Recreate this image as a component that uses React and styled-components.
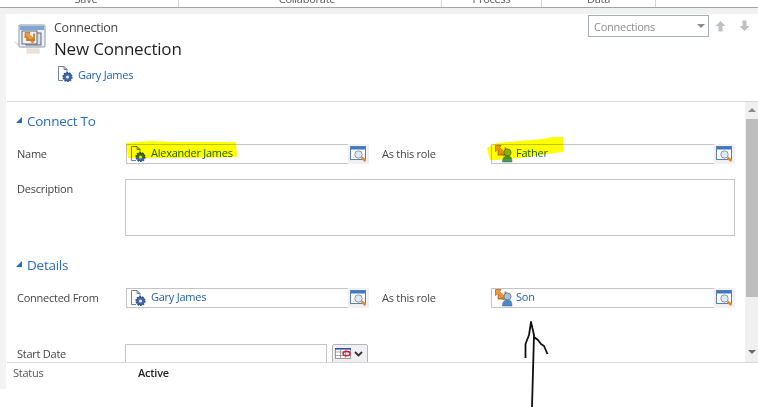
import React from "react";
import styled, { createGlobalStyle } from "styled-components";

const Global = createGlobalStyle`
  html, body { margin: 0; padding: 0; background: #fff; }
  body { font-family: "Open Sans", "Noto Sans", sans-serif; font-size: 11px; letter-spacing: -0.25px; color: #444; }
`;

const Page = styled.div`
  position: relative;
  width: 758px;
  height: 407px;
  overflow: hidden;
  background: #fff;
  display: flex;
  flex-direction: column;
`;
const Ribbon = styled.div`
  height: 7px;
  flex: none;
  display: flex;
  overflow: hidden;
  border-bottom: 1px solid #a3a3a3;
`;
const RibbonCell = styled.div`
  width: ${p => p.$w}px;
  flex: none;
  height: 7px;
  border-right: 1px solid #d4d4d4;
  box-sizing: border-box;
  padding-right: ${p => p.$pad || 0}px;
  display: flex;
  align-items: flex-end;
  justify-content: center;
  color: #5a5a5a;
  font-size: 11px;
  line-height: 16px;
  white-space: nowrap;
`;
const Band = styled.div`
  height: 6px;
  flex: none;
  background: #f1f1f1;
`;
const Shell = styled.div`
  height: 375px;
  flex: none;
  display: flex;
  background: #f3f3f3;
  padding-left: 6px;
`;
const Main = styled.div`
  flex: 1;
  min-width: 0;
  background: #fff;
  display: flex;
  flex-direction: column;
`;
const Header = styled.div`
  height: 87px;
  flex: none;
  margin-left: 1px;
  border-bottom: 1px solid #d6d6d6;
  display: flex;
  padding-left: 6px;
`;
const EntityIconWrap = styled.div`
  width: 41px;
  flex: none;
  padding-top: 10px;
`;
const Titles = styled.div`
  flex: 1;
  display: flex;
  flex-direction: column;
`;
const EntityType = styled.div`
  font-size: 12.5px;
  line-height: 16px;
  margin-top: 6px;
  color: #444;
`;
const EntityName = styled.div`
  font-size: 17px;
  line-height: 22px;
  margin-top: 2px;
  letter-spacing: -0.2px;
  color: #1f1f1f;
`;
const Owner = styled.div`
  display: flex;
  align-items: center;
  margin: 5px 0 0 3px;
  gap: 5px;
  color: #1f5fb4;
`;
const Pager = styled.div`
  display: flex;
  align-items: flex-start;
  padding: 1px 8px 0 0;
`;
const SelectBox = styled.div`
  width: 121px;
  height: 22px;
  box-sizing: border-box;
  border: 1px solid #a6adb8;
  display: flex;
  align-items: center;
  justify-content: space-between;
  padding: 0 3px 0 5px;
  color: #8c8c8c;
  font-size: 11px;
`;
const Caret = styled.span`
  width: 0;
  height: 0;
  border-left: 4px solid transparent;
  border-right: 4px solid transparent;
  border-top: 4px solid #8c8c8c;
`;
const PagerButtons = styled.div`
  display: flex;
  gap: 13px;
  margin: 5px 0 0 6px;
`;
const Body = styled.div`
  height: 260px;
  flex: none;
  display: flex;
`;
const Form = styled.div`
  flex: 1;
  min-width: 0;
  overflow: hidden;
  padding-left: 11px;
`;
const Section = styled.div`
  display: flex;
  align-items: center;
  gap: 5px;
  height: 18px;
  margin-top: ${p => p.$top}px;
  margin-left: -1px;
  color: #2a6bbd;
  font-size: 13.5px;
`;
const Triangle = styled.span`
  width: 0;
  height: 0;
  border-left: 6px solid transparent;
  border-bottom: 6px solid #1f6fc0;
  margin-top: -3px;
`;
const Row = styled.div`
  display: grid;
  grid-template-columns: 109px 243px 122px 244px;
  height: 20px;
  margin-top: ${p => p.$top}px;
  align-items: center;
`;
const Label = styled.div`
  color: #444;
  padding-left: ${p => p.$inset || 0}px;
  margin-top: -2px;
  white-space: nowrap;
`;
const Lookup = styled.div`
  height: 20px;
  box-sizing: border-box;
  border: 1px solid #c4c4c4;
  border-right: 0;
  display: flex;
  align-items: center;
  padding-left: 3px;
  gap: 5px;
  color: #1f5fb4;
  background: #fff;
`;
const LookupText = styled.span`
  flex: 1;
  margin-top: -4px;
`;
const LookupBtn = styled.span`
  width: 21px;
  height: 20px;
  margin: -1px 0;
  flex: none;
  background: #f0f0f3;
  display: flex;
  align-items: center;
  justify-content: center;
`;
const DescRow = styled.div`
  display: grid;
  grid-template-columns: 108px 610px;
  margin-top: 15px;
`;
const DescLabel = styled(Label)`
  margin-top: 2px;
`;
const TextArea = styled.div`
  height: 57px;
  box-sizing: border-box;
  border: 1px solid #c4c4c4;
`;
const DateRow = styled.div`
  display: flex;
  height: 22px;
  margin-top: 36px;
`;
const DateLabel = styled(Label)`
  width: 108px;
  flex: none;
  margin-top: 0;
  padding-top: 2px;
`;
const DateInput = styled.div`
  width: 202px;
  box-sizing: border-box;
  border: 1px solid #c4c4c4;
`;
const CalBtn = styled.div`
  width: 36px;
  box-sizing: border-box;
  margin-left: 5px;
  border: 1px solid #b4b4b8;
  border-radius: 2px 2px 0 0;
  background: #f0f0f3;
  display: flex;
  align-items: flex-start;
  justify-content: center;
  padding-top: 3px;
`;
const Scroll = styled.div`
  width: 13px;
  flex: none;
  background: #f0f0f0;
  display: flex;
  flex-direction: column;
  align-items: center;
`;
const ScrollUp = styled.span`
  width: 0;
  height: 0;
  margin-top: 6px;
  border-left: 4px solid transparent;
  border-right: 4px solid transparent;
  border-bottom: 4px solid #8a8a8a;
`;
const Thumb = styled.div`
  width: 12px;
  align-self: flex-end;
  height: 178px;
  margin-top: 7px;
  background: #bdbdbd;
`;
const ScrollDown = styled.span`
  width: 0;
  height: 0;
  margin-top: 53px;
  border-left: 4px solid transparent;
  border-right: 4px solid transparent;
  border-top: 4px solid #6a6a6a;
`;
const Footer = styled.div`
  flex: 1;
  border-top: 1px solid #d6d6d6;
  margin-left: 1px;
  display: flex;
  padding: 2px 0 0 6px;
  line-height: 15px;
`;
const FooterLabel = styled.div`
  width: 125px;
  color: #555;
`;
const FooterValue = styled.div`
  color: #262626;
  font-weight: 600;
`;
const Overlay = styled.svg`
  position: absolute;
  left: 0;
  top: 0;
  pointer-events: none;
`;
const Marker = styled.path`
  fill: #ffff00;
  mix-blend-mode: multiply;
`;
const Ink = styled.path`
  fill: none;
  stroke: #111;
  stroke-width: 1.8;
  stroke-linejoin: round;
`;

const DocGear = () => (
  <svg width="16" height="18" viewBox="0 0 16 18" style={{ flex: "none" }}>
    <path d="M1.500 1.500H7l3 3V8M1.500 1.500V15.500H6" fill="#fff" stroke="#6f82a0" />
    <path d="M7 1.500v3h3z" fill="#dfe6f0" stroke="#6f82a0" />
    <circle cx="10.500" cy="12" r="4.200" fill="#4468aa" stroke="#2d4d8c" strokeDasharray="1.700 .9" strokeWidth="1.800" />
    <circle cx="10.500" cy="12" r="1.600" fill="#e3ebf7" />
  </svg>
);
const RoleIcon = ({ tint }) => (
  <svg width="18" height="18" viewBox="0 0 18 18" style={{ flex: "none", marginRight: -2 }}>
    <path d="M0.500 0.500H6L4.500 2.500L11 8.500L8.500 11L2.500 4.800L0.500 6.500Z" fill="#ef9a3c" stroke="#b5651d" strokeWidth=".8" />
    <path d="M10.500 2.500V9.500H3.500V5.500" fill="none" stroke="#c8741f" strokeWidth="1.800" />
    <circle cx="12.500" cy="7.500" r="3.600" fill={tint === "green" ? "#8fb04a" : "#a9c3dc"} stroke="#4e6478" strokeWidth=".7" />
    <path d="M7.500 17c0-4.500 2-6 5-6s4.500 1.500 4.500 6z" fill={tint === "green" ? "#479a5c" : "#4a89c6"} stroke="#35608c" strokeWidth=".5" />
  </svg>
);
const LookupIcon = () => (
  <svg width="18" height="17" viewBox="0 0 18 17">
    <rect x="0.500" y="0.500" width="15" height="13" fill="#fff" stroke="#5a7fb0" />
    <rect x="1" y="1" width="14" height="2.500" fill="#3d78c8" />
    <circle cx="8.500" cy="8.500" r="3.700" fill="#dce8f2" stroke="#8a97a6" />
    <path d="M11.500 11.500l4 3.500" stroke="#e08a2c" strokeWidth="2.500" />
  </svg>
);
const CalIcon = () => (
  <svg width="30" height="12" viewBox="0 0 30 12">
    <rect x="0.500" y="0.500" width="15" height="10" fill="#fff" stroke="#999" />
    <path d="M0 .8H16" stroke="#2a4fb0" strokeWidth="1.600" />
    <path d="M5.500 1v10M10.500 1v10M0 4h16M0 7.500h16" stroke="#8f8f8f" strokeWidth=".8" />
    <ellipse cx="11.500" cy="5.500" rx="3.500" ry="2.300" fill="none" stroke="#d91f26" strokeWidth="1.400" />
    <path d="M20 4l3.500 3.500L27 4" fill="none" stroke="#333" strokeWidth="1.800" />
  </svg>
);
const EntityIcon = () => (
  <svg width="34" height="30" viewBox="0 0 34 30">
    <path d="M0 17l7 3v3z" fill="#d8d8d8" />
    <rect x="6" y="1" width="26" height="22" rx="1" fill="#eef1f5" stroke="#8b97a5" />
    <rect x="7" y="2" width="24" height="4" fill="#7fa6d2" />
    <rect x="13" y="9" width="15" height="12" fill="#d9dfe6" stroke="#5d6873" />
    <rect x="9" y="7" width="15" height="13" fill="#eef1f5" stroke="#5d6873" />
    <path d="M12 8.500H17L16 10.500L22 16L19.500 19L13.500 12.500L12 14Z" fill="#ef9a3c" stroke="#b5651d" strokeWidth=".7" />
    <path d="M21 9.500V16H14V12.500" fill="none" stroke="#d07a22" strokeWidth="1.800" />
    <rect x="14" y="25" width="12" height="4" fill="#f2e1d2" stroke="#ddd" />
  </svg>
);
const ArrowUp = ({ down }) => (
  <svg width="11" height="12" viewBox="0 0 11 12" style={down ? { transform: "rotate(180deg)" } : undefined}>
    <path d="M5.500 1L10.500 6H7.500V11.500H3.500V6H.5z" fill="#c0c0c0" />
  </svg>
);

const LookupField = ({ icon, children }) => (
  <Lookup>
    {icon}
    <LookupText>{children}</LookupText>
    <LookupBtn><LookupIcon /></LookupBtn>
  </Lookup>
);

export default function App() {
  return (
    <Page>
      <Global />
      <Ribbon>
        <RibbonCell $w={179} $pad={6}>Save</RibbonCell>
        <RibbonCell $w={263} $pad={6}>Collaborate</RibbonCell>
        <RibbonCell $w={100}>Process</RibbonCell>
        <RibbonCell $w={114}>Data</RibbonCell>
      </Ribbon>
      <Band />
      <Shell>
        <Main>
          <Header>
            <EntityIconWrap><EntityIcon /></EntityIconWrap>
            <Titles>
              <EntityType>Connection</EntityType>
              <EntityName>New Connection</EntityName>
              <Owner><DocGear />Gary James</Owner>
            </Titles>
            <Pager>
              <SelectBox>Connections<Caret /></SelectBox>
              <PagerButtons><ArrowUp /><ArrowUp down /></PagerButtons>
            </Pager>
          </Header>
          <Body>
            <Form>
              <Section $top={10}><Triangle />Connect To</Section>
              <Row $top={14}>
                <Label>Name</Label>
                <LookupField icon={<DocGear />}>Alexander James</LookupField>
                <Label $inset={13}>As this role</Label>
                <LookupField icon={<RoleIcon tint="green" />}>Father</LookupField>
              </Row>
              <DescRow>
                <DescLabel>Description</DescLabel>
                <TextArea />
              </DescRow>
              <Section $top={20}><Triangle />Details</Section>
              <Row $top={14}>
                <Label>Connected From</Label>
                <LookupField icon={<DocGear />}>Gary James</LookupField>
                <Label $inset={13}>As this role</Label>
                <LookupField icon={<RoleIcon />}>Son</LookupField>
              </Row>
              <DateRow>
                <DateLabel>Start Date</DateLabel>
                <DateInput />
                <CalBtn><CalIcon /></CalBtn>
              </DateRow>
            </Form>
            <Scroll>
              <ScrollUp />
              <Thumb />
              <ScrollDown />
            </Scroll>
          </Body>
          <Footer>
            <FooterLabel>Status</FooterLabel>
            <FooterValue>Active</FooterValue>
          </Footer>
        </Main>
      </Shell>
      <Overlay width="758" height="407" viewBox="0 0 758 407">
        <Marker d="M126 143L150 141L172 142L236 142L237 157L190 158L128 158Z" />
        <Marker d="M487 148L497 143L520 141L543 139L552 137L563 137L563 152L540 155L520 158L497 160L490 160Z" />
        <Ink d="M532 407L534 335L531 322L529 335L525.500 344L525.500 358M534 337L538 340L541 344L544 346L547.500 354" />
      </Overlay>
    </Page>
  );
}
